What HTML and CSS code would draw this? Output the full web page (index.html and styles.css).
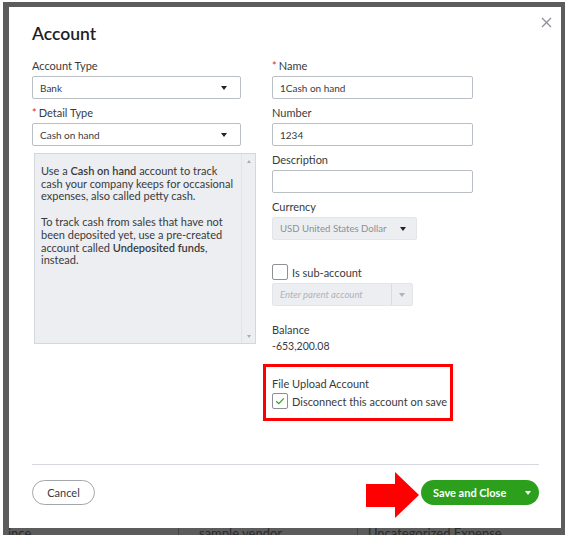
FILE: index.html
```html
<!DOCTYPE html>
<html lang="en">
<head>
    <meta charset="UTF-8">
    <meta name="viewport" content="width=device-width, initial-scale=1.0">
    <title>Account</title>
    <link rel="stylesheet" href="styles.css">
</head>
<body>
    <div class="backdrop">
        <div class="modal">
            <button class="close" aria-label="Close">
                <svg width="11" height="11" viewBox="0 0 11 11"><path d="M1 1L10 10M10 1L1 10" stroke="#8d9096" stroke-width="1.3" fill="none"/></svg>
            </button>
            <h1 class="title">Account</h1>

            <div class="form">
                <div class="col">
                    <div class="field">
                        <label class="label">Account Type</label>
                        <div class="input select wide">Bank<span class="caret"></span></div>
                    </div>
                    <div class="field">
                        <label class="label req">Detail Type</label>
                        <div class="input select wide">Cash on hand<span class="caret"></span></div>
                    </div>
                    <div class="help">
                        <div class="help-text">
                            <p>Use a <b>Cash on hand</b> account to track<br>cash your company keeps for occasional<br>expenses, also called petty cash.</p>
                            <p>To track cash from sales that have not<br>been deposited yet, use a pre-created<br>account called <b>Undeposited funds</b>,<br>instead.</p>
                        </div>
                        <div class="scrollbar">
                            <span class="arrow up"></span>
                            <span class="arrow down"></span>
                        </div>
                    </div>
                </div>

                <div class="col">
                    <div class="field">
                        <label class="label req">Name</label>
                        <div class="input">1Cash on hand</div>
                    </div>
                    <div class="field">
                        <label class="label">Number</label>
                        <div class="input">1234</div>
                    </div>
                    <div class="field">
                        <label class="label">Description</label>
                        <div class="input"></div>
                    </div>
                    <div class="field">
                        <label class="label">Currency</label>
                        <div class="input select disabled currency">USD United States Dollar<span class="caret"></span></div>
                    </div>

                    <div class="check-row sub">
                        <span class="checkbox"></span>
                        <span>Is sub-account</span>
                    </div>
                    <div class="combo">
                        <span class="combo-text">Enter parent account</span>
                        <span class="combo-btn"><span class="caret light"></span></span>
                    </div>

                    <div class="balance">
                        <div class="label">Balance</div>
                        <div class="amount">-653,200.08</div>
                    </div>

                    <div class="upload">
                        <div class="label">File Upload Account</div>
                        <div class="check-row">
                            <span class="checkbox">
                                <svg width="10" height="8" viewBox="0 0 10 8"><path d="M1.2 4.2L3.8 6.6L8.8 1.4" stroke="#2ca01c" stroke-width="1.2" fill="none"/></svg>
                            </span>
                            <span>Disconnect this account on save</span>
                        </div>
                    </div>
                </div>
            </div>

            <div class="footer">
                <div class="divider"></div>
                <div class="actions">
                    <button class="btn cancel">Cancel</button>
                    <svg class="pointer" width="54" height="47" viewBox="0 0 54 47"><polygon points="0,12 29,12 29,0 53,23 29,46 29,35 0,35" fill="#ff0000"/></svg>
                    <button class="btn save">Save and Close<span class="caret white"></span></button>
                </div>
            </div>
        </div>
        <div class="rows">
            <span>ince</span>
            <span>sample vendor</span>
            <span>Uncategorized Expense</span>
        </div>
    </div>
</body>
</html>
```

FILE: styles.css
```css
body {
    margin: 0;
    background: #fff;
    font-family: Lato, "Open Sans", sans-serif;
}
.backdrop {
    margin: 2px 0 0 3px;
    width: 562px;
    height: 533px;
    box-sizing: border-box;
    background: #5c5c5c;
    padding: 5px 4px 0 6px;
    display: flex;
    flex-direction: column;
    overflow: hidden;
}
.modal {
    position: relative;
    background: #fff;
    height: 521px;
    flex-shrink: 0;
    box-sizing: border-box;
    padding: 16px 22px 23px 23px;
    display: flex;
    flex-direction: column;
    color: #393a3d;
}
.close {
    position: absolute;
    top: 9px;
    right: 9px;
    border: 0;
    background: none;
    padding: 0;
    width: 11px;
    height: 11px;
}
.title {
    margin: 0;
    font-size: 17.5px;
    line-height: 22px;
    font-weight: 600;
    color: #1e1e1e;
}
.form {
    margin-top: 14px;
    display: grid;
    grid-template-columns: 224px 201px;
    column-gap: 16px;
}
.field {
    margin-bottom: 7px;
}
.label {
    display: block;
    font-size: 11px;
    line-height: 14px;
    margin-bottom: 3px;
    color: #393a3d;
}
.req::before {
    content: "*";
    color: #e0301e;
    margin-right: 2px;
}
.input {
    position: relative;
    height: 23px;
    box-sizing: border-box;
    border: 1px solid #babec5;
    border-radius: 2px;
    font-size: 10px;
    padding: 0 7px;
    display: flex;
    align-items: center;
    color: #393a3d;
}
.wide {
    width: 209px;
}
.caret {
    width: 0;
    height: 0;
    flex-shrink: 0;
    border-left: 3.5px solid transparent;
    border-right: 3.5px solid transparent;
    border-top: 4px solid #222;
    margin-left: auto;
    margin-right: 6px;
}
.caret.light {
    border-top-color: #b0b3b8;
    margin: 0;
}
.caret.white {
    border-top-color: #fff;
    margin: 0 0 0 auto;
}
.disabled {
    background: #eceef1;
    border-color: #e3e5e8;
    color: #8d9096;
}
.currency {
    width: 145px;
    font-size: 9.6px;
}
.currency .caret {
    margin-right: 3px;
}

.help {
    margin: 4px 0 0 2px;
    width: 222px;
    height: 191px;
    box-sizing: border-box;
    border: 1px solid #d4d7dc;
    background: #eceef1;
    display: flex;
}
.help-text {
    flex: 1;
    padding: 11px 0 0 6px;
    font-size: 11px;
    line-height: 12.7px;
    white-space: nowrap;
    color: #393a3d;
}
.help-text p {
    margin: 0 0 13px;
}
.help-text b {
    font-weight: 600;
}
.scrollbar {
    width: 13px;
    border-left: 1px solid #e2e4e7;
    display: flex;
    flex-direction: column;
    justify-content: space-between;
    align-items: center;
    padding: 6px 0 5px;
}
.arrow {
    width: 0;
    height: 0;
    border-left: 2.5px solid transparent;
    border-right: 2.5px solid transparent;
}
.arrow.up {
    border-bottom: 3px solid #a9acb0;
}
.arrow.down {
    border-top: 3px solid #a9acb0;
}

.check-row {
    display: flex;
    align-items: center;
    gap: 4px;
    font-size: 11px;
    color: #393a3d;
}
.check-row.sub {
    margin-top: 24px;
}
.checkbox {
    width: 16px;
    height: 16px;
    box-sizing: border-box;
    border: 1px solid #8d9096;
    border-radius: 2px;
    display: flex;
    align-items: center;
    justify-content: center;
    background: #fff;
}
.combo {
    margin-top: 3px;
    width: 141px;
    height: 23px;
    box-sizing: border-box;
    border: 1px solid #e3e5e8;
    background: #eceef1;
    border-radius: 2px;
    display: flex;
    align-items: center;
}
.combo-text {
    flex: 1;
    padding-left: 7px;
    font-size: 9.5px;
    font-style: italic;
    color: #b0b3b8;
}
.combo-btn {
    width: 20px;
    height: 100%;
    border-left: 1px solid #d9dbdf;
    display: flex;
    align-items: center;
    justify-content: center;
}
.balance {
    margin-top: 17px;
}
.balance .label {
    margin-bottom: 2px;
}
.amount {
    font-size: 10.5px;
    line-height: 14px;
    color: #393a3d;
}
.upload {
    margin: 11px 0 0 -9px;
    width: 190px;
    box-sizing: border-box;
    border: 3px solid #ff0000;
    padding: 10px 0 9px 6px;
}
.upload .label {
    margin-bottom: 2px;
}

.footer {
    margin-top: auto;
}
.divider {
    height: 1px;
    background: #d4d7dc;
    margin-bottom: 15px;
}
.actions {
    position: relative;
    display: flex;
    justify-content: space-between;
    align-items: center;
}
.btn {
    height: 25px;
    border-radius: 13px;
    font-family: Lato, "Open Sans", sans-serif;
    font-size: 11px;
    padding: 0;
    cursor: pointer;
}
.cancel {
    width: 63px;
    background: #fff;
    border: 1.5px solid #a3a6ab;
    color: #393a3d;
}
.save {
    width: 118px;
    background: #2ca01c;
    border: 0;
    color: #fff;
    font-weight: 700;
    display: flex;
    align-items: center;
    padding: 0 8px 0 12px;
}
/* red callout arrow pointing at the save button */
.pointer {
    position: absolute;
    left: 334px;
    top: -8px;
}

.rows {
    margin-left: -6px;
    height: 7px;
    display: grid;
    grid-template-columns: 176px 179px 1fr;
    font-size: 13px;
    line-height: 11px;
    color: #2b2b2b;
    overflow: hidden;
}
.rows span {
    padding-left: 5px;
    border-right: 1px solid #444;
}
.rows span + span {
    padding-left: 20px;
}
.rows span:last-child {
    padding-left: 10px;
    border-right: 0;
}
```
